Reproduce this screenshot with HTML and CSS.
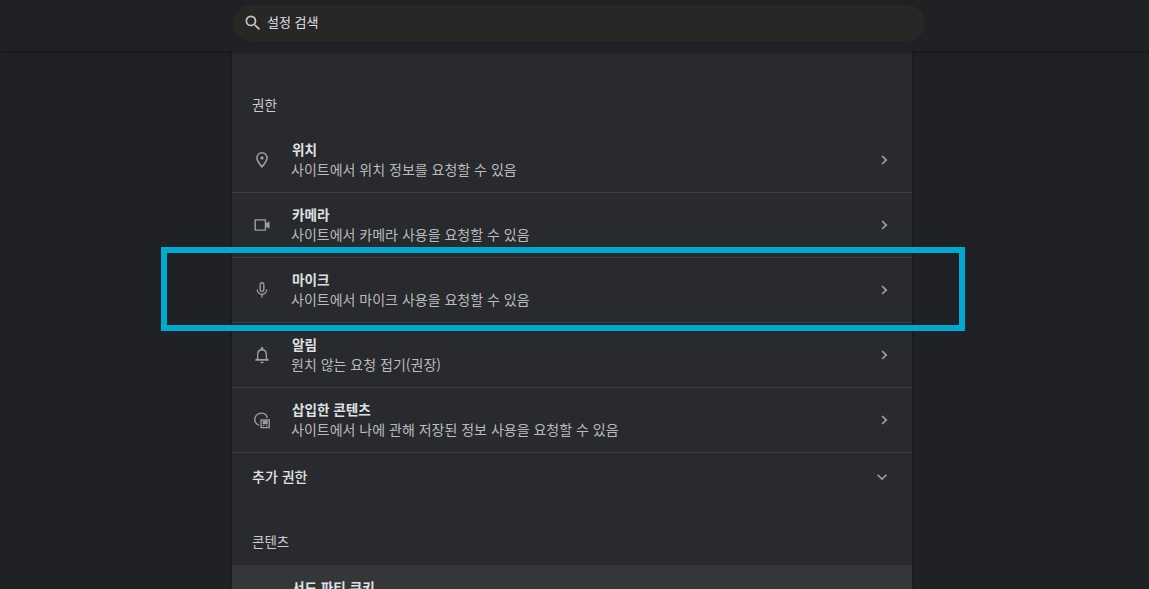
FILE: index.html
```html
<!DOCTYPE html>
<html lang="ko">
<head>
  <meta charset="UTF-8" />
  <title>설정</title>
  <link rel="stylesheet" href="styles.css">
</head>
<body>

  <header class="top-bar">
    <div class="search-box">
      <svg class="search-icon" viewBox="0 0 24 24"><path d="M15.500 14h-.79l-.28-.27A6.470 6.470 0 0 0 16 9.500 6.500 6.500 0 1 0 9.500 16c1.610 0 3.090-.59 4.230-1.570l.27.28v.79l5 4.990L20.490 19l-4.990-5zm-6 0C7.010 14 5 11.990 5 9.500S7.010 5 9.500 5 14 7.010 14 9.500 11.990 14 9.500 14z"/></svg>
      <span class="search-label">설정 검색</span>
    </div>
  </header>

  <main class="card">
    <h2 class="section-title first">권한</h2>

    <div class="row">
      <svg class="row-icon" viewBox="0 0 24 24"><path d="M12 2.500a7 7 0 0 0-7 7c0 4.800 7 12 7 12s7-7.200 7-12a7 7 0 0 0-7-7zm0 16.100C9.800 16 6.800 12 6.800 9.500a5.200 5.200 0 0 1 10.400 0c0 2.500-3 6.500-5.200 9.100z"/><circle cx="12" cy="9.500" r="2"/></svg>
      <div class="row-text">
        <div class="row-title">위치</div>
        <div class="row-sub">사이트에서 위치 정보를 요청할 수 있음</div>
      </div>
      <svg class="chevron" viewBox="0 0 24 24"><path d="M9.200 6.500 7.800 7.900 12 12l-4.200 4.100 1.400 1.400L15 12z"/></svg>
    </div>

    <div class="row">
      <svg class="row-icon" viewBox="0 0 24 24"><path d="M3 5h14v5l4-2.500v9L17 14v5H3V5zm1.700 1.700v10.600h10.600V6.700H4.700z"/></svg>
      <div class="row-text">
        <div class="row-title">카메라</div>
        <div class="row-sub">사이트에서 카메라 사용을 요청할 수 있음</div>
      </div>
      <svg class="chevron" viewBox="0 0 24 24"><path d="M9.200 6.500 7.800 7.900 12 12l-4.200 4.100 1.400 1.400L15 12z"/></svg>
    </div>

    <div class="row">
      <svg class="row-icon" viewBox="0 0 24 24"><path d="M12 14.500a3 3 0 0 0 3-3v-6a3 3 0 0 0-6 0v6a3 3 0 0 0 3 3zm-1.400-9a1.400 1.400 0 0 1 2.800 0v6a1.400 1.400 0 0 1-2.800 0v-6z"/><path d="M17 11.500c0 2.800-2.200 5-5 5s-5-2.200-5-5H5.500c0 3.300 2.400 6 5.700 6.400V21h1.600v-3.100c3.300-.4 5.700-3.100 5.700-6.400H17z"/></svg>
      <div class="row-text">
        <div class="row-title">마이크</div>
        <div class="row-sub">사이트에서 마이크 사용을 요청할 수 있음</div>
      </div>
      <svg class="chevron" viewBox="0 0 24 24"><path d="M9.200 6.500 7.800 7.900 12 12l-4.200 4.100 1.400 1.400L15 12z"/></svg>
    </div>

    <div class="row">
      <svg class="row-icon" viewBox="0 0 24 24"><path d="M18 16v-5c0-3-1.600-5.400-4.500-6.100V4a1.500 1.500 0 0 0-3 0v.9C7.600 5.600 6 8 6 11v5l-2 1.500V19h16v-1.500L18 16zm-1.600.9H7.600V11c0-2.500 1.800-4.500 4.400-4.500s4.400 2 4.400 4.500v5.900z"/><path d="M12 22a2 2 0 0 0 2-2h-4a2 2 0 0 0 2 2z"/></svg>
      <div class="row-text">
        <div class="row-title">알림</div>
        <div class="row-sub">원치 않는 요청 접기(권장)</div>
      </div>
      <svg class="chevron" viewBox="0 0 24 24"><path d="M9.200 6.500 7.800 7.900 12 12l-4.200 4.100 1.400 1.400L15 12z"/></svg>
    </div>

    <div class="row">
      <svg class="row-icon" viewBox="0 0 24 24"><path d="M10.500 3a8.500 8.500 0 0 0-8 8.500c0 3.700 2.500 6.800 6 7.700v-1.700a6.700 6.700 0 0 1-4.300-6.300 6.800 6.800 0 0 1 13.300-1.700h1.700A8.500 8.500 0 0 0 10.500 3z"/><path d="M10 11h11.500v11H10V11zm1.600 1.600v7.800h8.300v-7.800h-8.300z"/><path d="M12.800 12.600h6v4.400h-6zM13 18h1.600v1.400H13zM16.800 18h1.600v1.400h-1.600z"/></svg>
      <div class="row-text">
        <div class="row-title">삽입한 콘텐츠</div>
        <div class="row-sub">사이트에서 나에 관해 저장된 정보 사용을 요청할 수 있음</div>
      </div>
      <svg class="chevron" viewBox="0 0 24 24"><path d="M9.200 6.500 7.800 7.900 12 12l-4.200 4.100 1.400 1.400L15 12z"/></svg>
    </div>

    <div class="more-row">
      <span>추가 권한</span>
      <svg class="chevron-down" viewBox="0 0 24 24"><path d="M7.400 8.600 12 13.200l4.600-4.600L18 10l-6 6-6-6z"/></svg>
    </div>

    <h2 class="section-title">콘텐츠</h2>

    <div class="row hovered">
      <div class="row-text">
        <div class="row-title">서드 파티 쿠키</div>
      </div>
    </div>
  </main>

  <div class="highlight"></div>

</body>
</html>
```

FILE: styles.css
```css
body {
  margin: 0;
  height: 589px;
  overflow: hidden;
  position: relative;
  background: #202124;
  font-family: "Noto Sans CJK KR", "Noto Sans", sans-serif;
  font-size: 14px;
  color: #e8eaed;
}

.top-bar {
  position: relative;
  z-index: 2;
  height: 51px;
  padding: 5px 0 0 233px;
  box-sizing: border-box;
  background: #202124;
  box-shadow: 0 1px 3px rgba(0, 0, 0, 0.35);
}

.search-box {
  width: 692px;
  height: 36px;
  display: flex;
  align-items: center;
  box-sizing: border-box;
  padding-left: 10px;
  gap: 4px;
  border-radius: 18px;
  background: #282725;
  color: #dfe1e5;
  font-size: 13px;
}

.search-icon {
  width: 20px;
  height: 20px;
  fill: #c4c7c9;
}

.search-label {
  margin-top: -3px;
}

.card {
  width: 680px;
  height: 538px;
  margin-left: 232px;
  background: #292a2d;
  box-shadow: 0 0 3px rgba(0, 0, 0, 0.4);
}

.section-title {
  margin: 0;
  padding: 0 20px;
  height: 24px;
  line-height: 24px;
  font-size: 13.5px;
  font-weight: 400;
  color: #c8cacd;
}

.section-title.first {
  padding-top: 41px;
  padding-bottom: 12px;
}

.row {
  height: 64px;
  display: flex;
  align-items: center;
  padding: 0 20px;
  border-bottom: 1px solid #3f4043;
}

.row-icon {
  width: 20px;
  height: 20px;
  flex: none;
  fill: #9aa0a6;
}

.row-text {
  margin-left: 19px;
  margin-top: -3px;
  flex: 1;
  line-height: 20px;
}

.row-title {
  font-size: 13.6px;
  font-weight: 700;
  color: #dfe1e4;
  padding-left: 1px;
}

.row-sub {
  color: #b9bbbe;
}

.chevron {
  width: 20px;
  height: 20px;
  margin-right: -3px;
  fill: #9aa0a6;
}

.more-row {
  height: 48px;
  display: flex;
  align-items: center;
  justify-content: space-between;
  box-sizing: border-box;
  padding: 0 20px 3px;
  margin-bottom: 28px;
  font-weight: 500;
  color: #e0e2e5;
}

.chevron-down {
  width: 20px;
  height: 20px;
  margin-top: 3px;
  fill: #9aa0a6;
}

.more-row + .section-title {
  margin-bottom: 12px;
}

.row.hovered {
  background: #353638;
  border-bottom: none;
  align-items: flex-start;
  padding: 15px 20px 0 40px;
  box-sizing: border-box;
}

.highlight {
  position: absolute;
  z-index: 3;
  left: 161px;
  top: 247px;
  width: 804px;
  height: 84px;
  box-sizing: border-box;
  border: 6px solid #00a9d0;
}
```
